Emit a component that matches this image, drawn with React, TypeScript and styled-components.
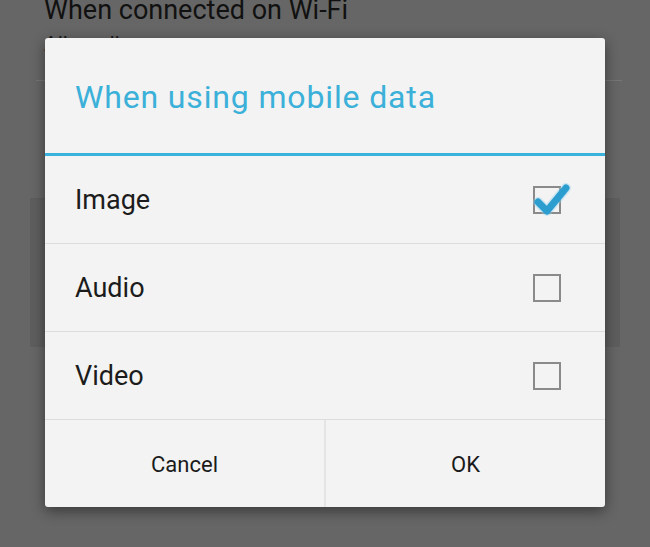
import styled, { createGlobalStyle } from "styled-components";

const GlobalStyle = createGlobalStyle`
  html, body {
    margin: 0;
    padding: 0;
    background: #666666;
  }
  body {
    font-family: Roboto, "Noto Sans", sans-serif;
  }
`;

const Screen = styled.div`
  position: relative;
  width: 650px;
  height: 547px;
  overflow: hidden;
  background: #666666;
`;

const SettingsList = styled.div`
  display: flex;
  flex-direction: column;
  padding: 0 28px 0 44px;
`;

const SettingTitle = styled.div`
  font-size: 27px;
  line-height: 28px;
  color: #111;
  margin-top: -4px;
`;

const SettingSummary = styled.div`
  font-size: 21px;
  line-height: 24px;
  color: #1a1a1a;
  margin-top: 8px;
  height: 48px;
`;

const SettingDivider = styled.div`
  height: 1px;
  margin-left: -8px;
  background: #767676;
`;

const PressedRow = styled.div`
  margin: 117px 2px 0 -14px;
  height: 149px;
  background: #5e5e5e;
`;

const Dialog = styled.div`
  position: absolute;
  left: 45px;
  top: 38px;
  width: 560px;
  height: 469px;
  background: #f3f3f3;
  border-radius: 3px;
  box-shadow: 0 4px 14px rgba(0, 0, 0, 0.45);
  display: flex;
  flex-direction: column;
  overflow: hidden;
`;

const Title = styled.div`
  height: 118px;
  flex-shrink: 0;
  display: flex;
  align-items: center;
  padding-left: 30px;
  padding-top: 3px;
  box-sizing: border-box;
  font-size: 32px;
  letter-spacing: 0.85px;
  color: #3bb0d9;
  border-bottom: 3px solid #3ab3dc;
`;

const OptionRow = styled.div`
  height: 88px;
  flex-shrink: 0;
  display: flex;
  align-items: center;
  justify-content: space-between;
  padding: 0 44px 0 30px;
  border-bottom: 1px solid #dcdcdc;
  box-sizing: border-box;
`;

const OptionLabel = styled.span`
  font-size: 27px;
  color: #1c1c1c;
`;

const CheckBox = styled.div`
  position: relative;
  width: 28px;
  height: 28px;
  box-sizing: border-box;
  border: 2px solid #8a8a8a;
`;

const CheckMark = styled.svg`
  position: absolute;
  left: -2px;
  top: -2px;
  overflow: visible;
`;

const ButtonBar = styled.div`
  flex: 1;
  display: flex;
`;

const DialogButton = styled.div<{ $divider?: boolean }>`
  flex: 1;
  display: flex;
  align-items: center;
  justify-content: center;
  font-size: 22px;
  color: #1a1a1a;
  padding-top: 2px;
  border-right: ${(p) => (p.$divider ? "2px solid #e4e4e4" : "none")};
`;

const options = [
  { label: "Image", checked: true },
  { label: "Audio", checked: false },
  { label: "Video", checked: false },
];

const CHECK = "M5 16 L14 25 L33 2";

export default function App() {
  return (
    <Screen>
      <GlobalStyle />
      <SettingsList>
        <SettingTitle>When connected on Wi-Fi</SettingTitle>
        <SettingSummary>All media</SettingSummary>
        <SettingDivider />
        <PressedRow />
      </SettingsList>
      <Dialog>
        <Title>When using mobile data</Title>
        {options.map((o) => (
          <OptionRow key={o.label}>
            <OptionLabel>{o.label}</OptionLabel>
            <CheckBox>
              {o.checked && (
                <CheckMark width="28" height="28" viewBox="0 0 28 28">
                  <path
                    d={CHECK}
                    fill="none"
                    stroke="#8fd3f0"
                    strokeWidth="10"
                    strokeLinecap="round"
                    strokeLinejoin="round"
                    opacity="0.4"
                  />
                  <path
                    d={CHECK}
                    fill="none"
                    stroke="#2b9dcf"
                    strokeWidth="7"
                    strokeLinecap="round"
                    strokeLinejoin="round"
                  />
                </CheckMark>
              )}
            </CheckBox>
          </OptionRow>
        ))}
        <ButtonBar>
          <DialogButton $divider>Cancel</DialogButton>
          <DialogButton>OK</DialogButton>
        </ButtonBar>
      </Dialog>
    </Screen>
  );
}
